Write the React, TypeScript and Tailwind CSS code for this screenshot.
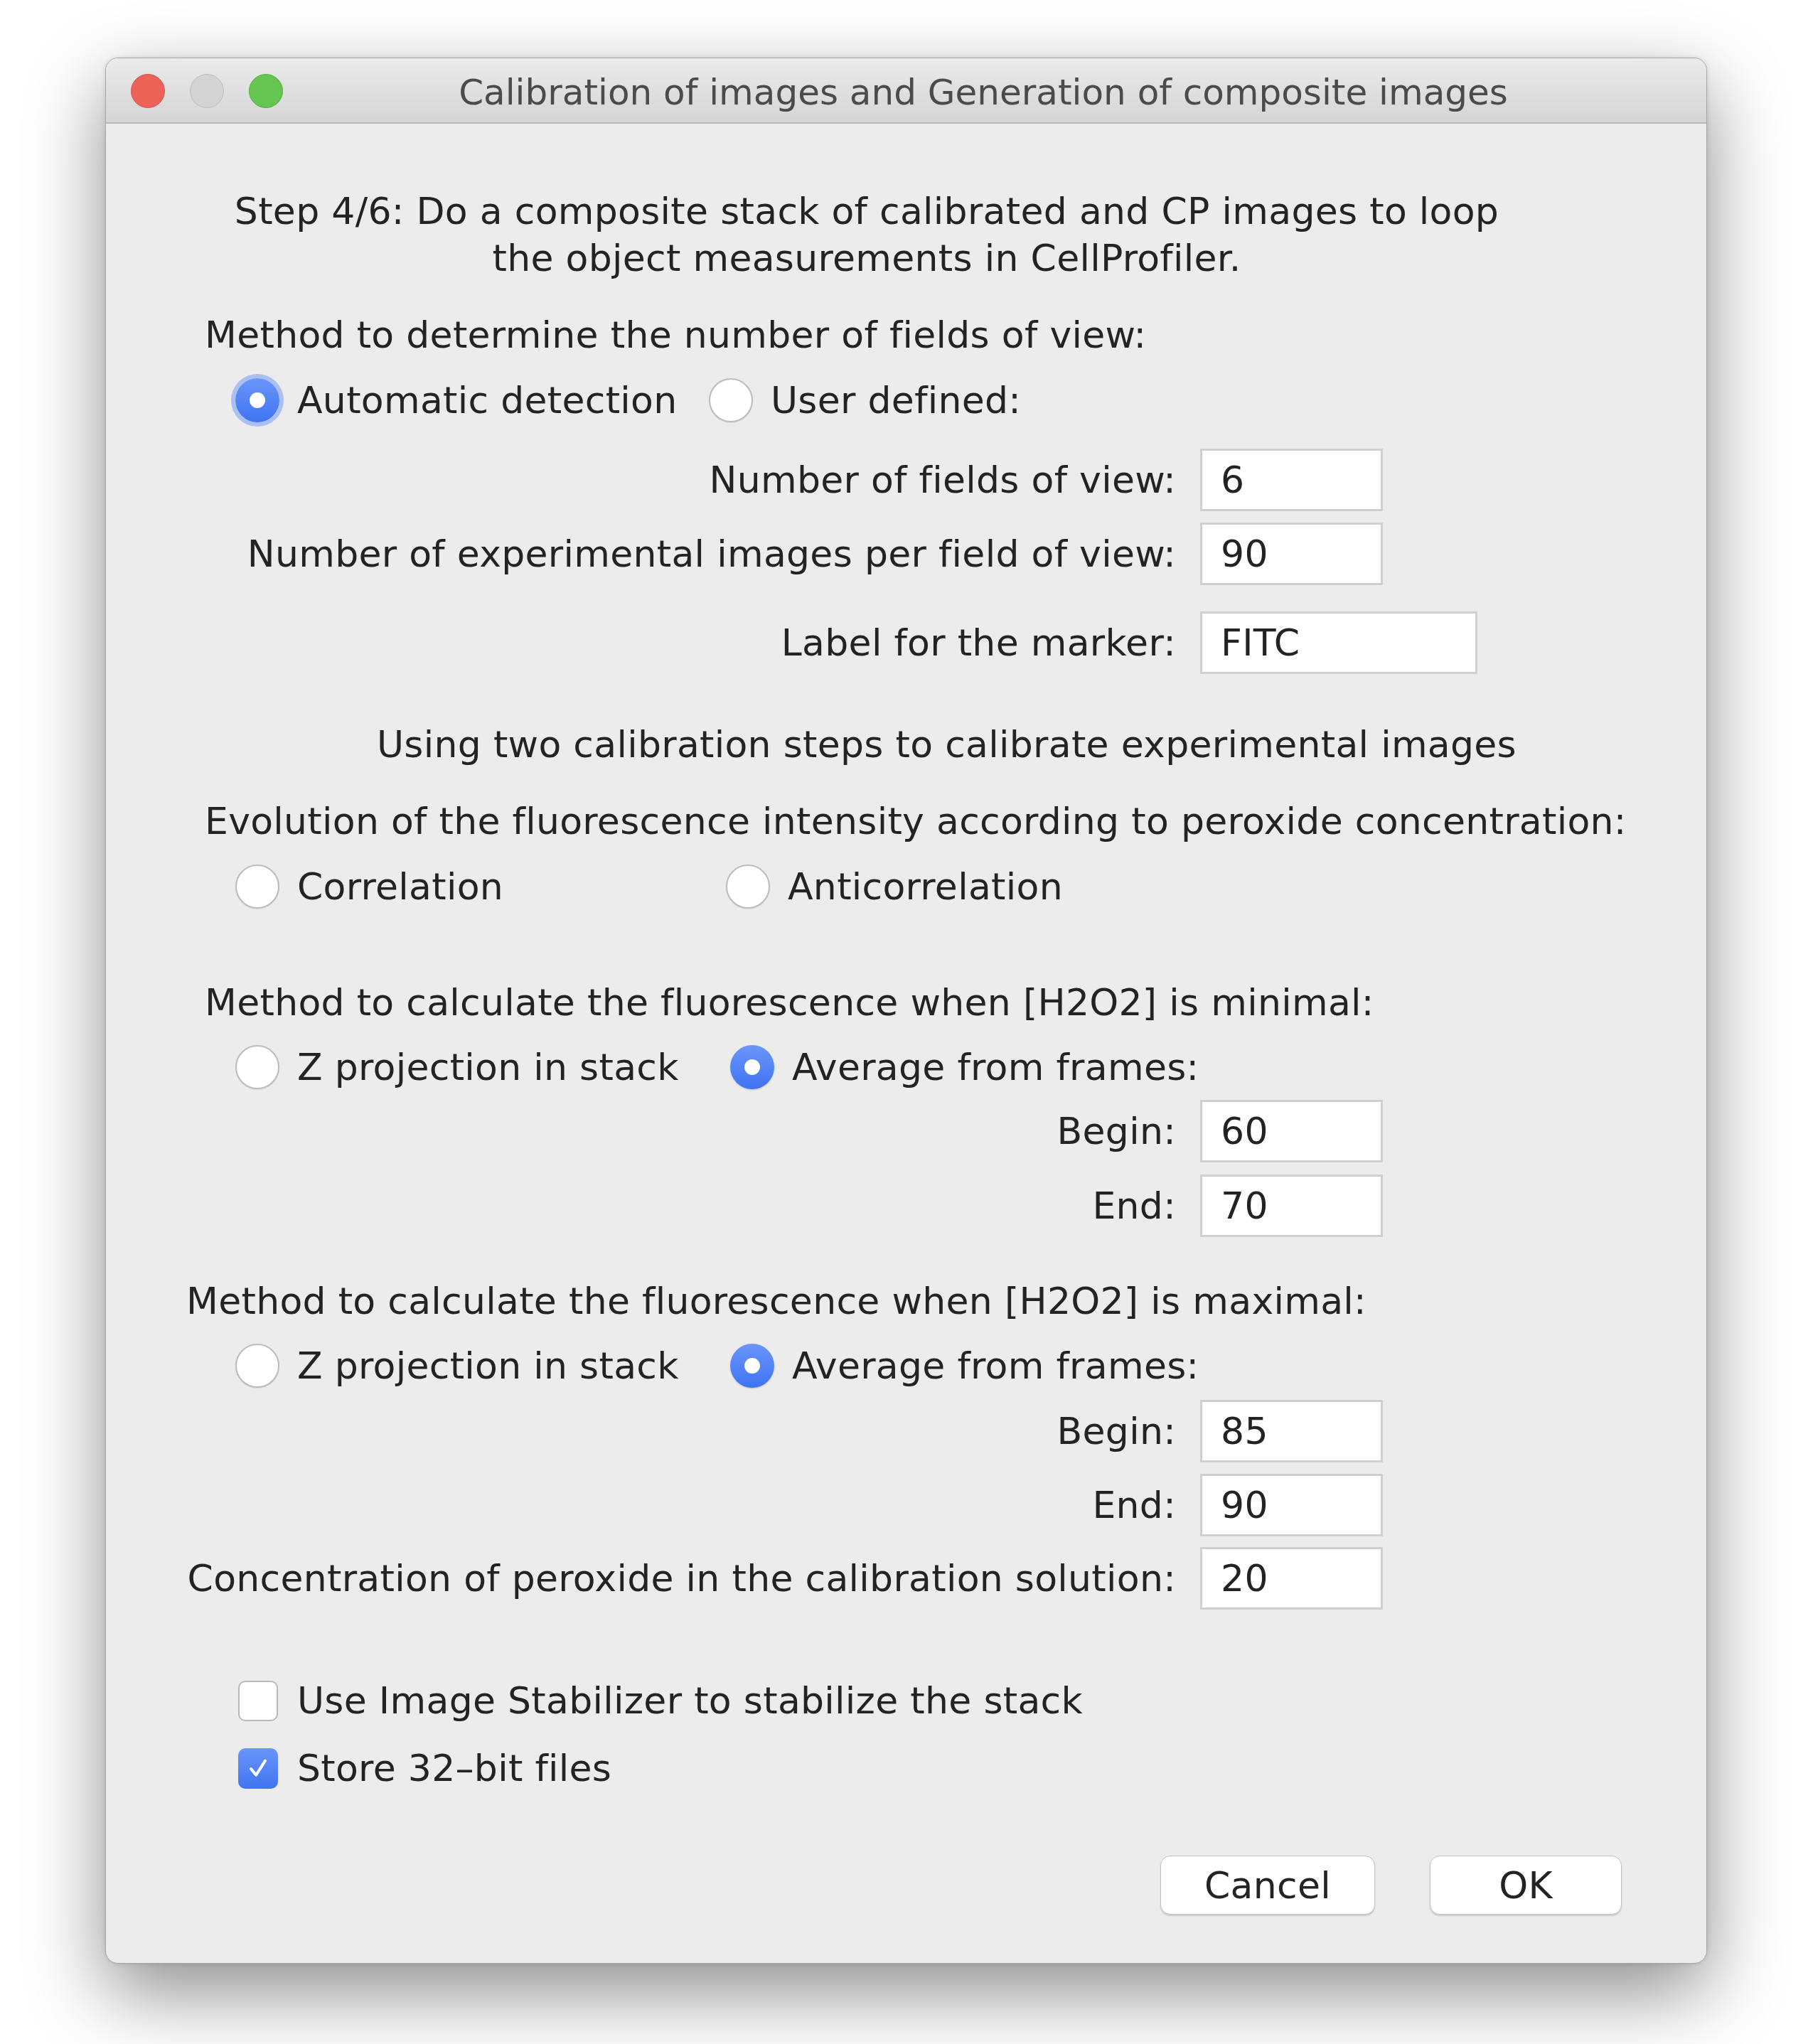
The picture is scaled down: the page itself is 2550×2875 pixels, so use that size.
import React from "react";

function RadioDot({ checked, focus }: { checked?: boolean; focus?: boolean }) {
  if (checked) {
    return (
      <span
        className={
          "flex h-[62px] w-[62px] shrink-0 items-center justify-center rounded-full bg-gradient-to-b from-[#6a95fa] to-[#3f73f2] " +
          (focus ? "shadow-[0_0_0_6px_rgba(90,140,250,0.45)]" : "shadow-[0_1px_2px_rgba(0,0,0,0.2)]")
        }
      >
        <span className="h-[22px] w-[22px] rounded-full bg-white" />
      </span>
    );
  }
  return (
    <span className="h-[62px] w-[62px] shrink-0 rounded-full border-2 border-[#bcbcbc] bg-white shadow-[0_1px_1px_rgba(0,0,0,0.08)]" />
  );
}

function Radio({ label, checked, focus, className }: { label: string; checked?: boolean; focus?: boolean; className?: string }) {
  return (
    <div className={"flex items-center " + (className ?? "")}>
      <RadioDot checked={checked} focus={focus} />
      <span className="ml-[25px] whitespace-nowrap">{label}</span>
    </div>
  );
}

function Field({ label, value, wide }: { label: string; value: string; wide?: boolean }) {
  return (
    <div className="flex h-[88px] items-center">
      <div className="w-[1505px] whitespace-nowrap text-right">{label}</div>
      <div
        className={
          "ml-[34px] flex h-[88px] items-center border-[3px] border-[#d0d0d0] bg-white pl-[26px] " +
          (wide ? "w-[390px]" : "w-[257px]")
        }
      >
        {value}
      </div>
    </div>
  );
}

function Check({ label, checked }: { label: string; checked?: boolean }) {
  return (
    <div className="flex h-[66px] items-center pl-[186px]">
      {checked ? (
        <span className="flex h-[57px] w-[56px] items-center justify-center rounded-[10px] bg-gradient-to-b from-[#6a95fa] to-[#3f73f2]">
          <svg viewBox="0 0 20 20" width="40" height="40">
            <path d="M5 10.5 L8.6 14.8 L15 4.8" fill="none" stroke="#fff" strokeWidth="2" strokeLinecap="round" strokeLinejoin="round" />
          </svg>
        </span>
      ) : (
        <span className="h-[57px] w-[56px] rounded-[10px] border-2 border-[#b9b9b9] bg-white" />
      )}
      <span className="ml-[27px] whitespace-nowrap">{label}</span>
    </div>
  );
}

export default function App() {
  return (
    <div className="min-h-[2875px] w-[2550px] overflow-hidden bg-white pl-[148px] pt-[81px] font-['DejaVu_Sans',sans-serif] text-[52px] tracking-[0.3px] text-[#232323]">
      <div className="flex h-[2681px] w-[2253px] flex-col overflow-hidden rounded-[18px] border border-[#a6a6a6] bg-[#ececec] shadow-[0_40px_110px_rgba(0,0,0,0.45),0_0_6px_rgba(0,0,0,0.12)]">
        {/* Title bar */}
        <div className="flex h-[92px] shrink-0 items-center border-b-2 border-[#b6b6b6] bg-gradient-to-b from-[#ebebeb] to-[#d5d5d5]">
          <div className="flex items-center gap-[35px] pl-[35px] pt-[2px]">
            <span className="h-[48px] w-[48px] rounded-full border border-[#d4564d] bg-[#ec6257]" />
            <span className="h-[48px] w-[48px] rounded-full border border-[#bdbdbd] bg-[#d3d3d3]" />
            <span className="h-[48px] w-[48px] rounded-full border border-[#55ad42] bg-[#64c651]" />
          </div>
          <div className="flex-1 whitespace-nowrap pr-[32px] pt-[6px] text-center text-[50px] tracking-normal text-[#4b4b4b]">
            Calibration of images and Generation of composite images
          </div>
        </div>

        {/* Content */}
        <div className="flex flex-col pt-[90px]">
          <div className="pr-[111px] text-center leading-[66px]">
            Step 4/6: Do a composite stack of calibrated and CP images to loop
            <br />
            the object measurements in CellProfiler.
          </div>

          <div className="mt-[42px] h-[66px] whitespace-nowrap pl-[139px] leading-[66px]">
            Method to determine the number of fields of view:
          </div>
          <div className="mt-[26px] flex h-[66px] items-center pl-[182px]">
            <Radio label="Automatic detection" checked focus className="w-[666px]" />
            <Radio label="User defined:" />
          </div>

          <div className="mt-[35px]">
            <Field label="Number of fields of view:" value="6" />
          </div>
          <div className="mt-[16px]">
            <Field label="Number of experimental images per field of view:" value="90" />
          </div>
          <div className="mt-[37px]">
            <Field label="Label for the marker:" value="FITC" wide />
          </div>

          <div className="mt-[66px] h-[66px] whitespace-nowrap pl-[381px] leading-[66px]">
            Using two calibration steps to calibrate experimental images
          </div>

          <div className="mt-[42px] h-[66px] whitespace-nowrap pl-[139px] leading-[66px]">
            Evolution of the fluorescence intensity according to peroxide concentration:
          </div>
          <div className="mt-[26px] flex h-[66px] items-center pl-[182px]">
            <Radio label="Correlation" className="w-[690px]" />
            <Radio label="Anticorrelation" />
          </div>

          <div className="mt-[97px] h-[66px] whitespace-nowrap pl-[139px] leading-[66px]">
            Method to calculate the fluorescence when [H2O2] is minimal:
          </div>
          <div className="mt-[25px] flex h-[66px] items-center pl-[182px]">
            <Radio label="Z projection in stack" className="w-[696px]" />
            <Radio label="Average from frames:" checked />
          </div>
          <div className="mt-[13px]">
            <Field label="Begin:" value="60" />
          </div>
          <div className="mt-[17px]">
            <Field label="End:" value="70" />
          </div>

          <div className="mt-[57px] h-[66px] whitespace-nowrap pl-[113px] leading-[66px]">
            Method to calculate the fluorescence when [H2O2] is maximal:
          </div>
          <div className="mt-[25px] flex h-[66px] items-center pl-[182px]">
            <Radio label="Z projection in stack" className="w-[696px]" />
            <Radio label="Average from frames:" checked />
          </div>
          <div className="mt-[15px]">
            <Field label="Begin:" value="85" />
          </div>
          <div className="mt-[16px]">
            <Field label="End:" value="90" />
          </div>
          <div className="mt-[15px]">
            <Field label="Concentration of peroxide in the calibration solution:" value="20" />
          </div>

          <div className="mt-[95px]">
            <Check label="Use Image Stabilizer to stabilize the stack" />
          </div>
          <div className="mt-[29px]">
            <Check label="Store 32–bit files" checked />
          </div>

          <div className="mt-[90px] flex justify-end gap-[77px] pr-[119px]">
            <button className="h-[83px] w-[302px] rounded-[14px] border border-[#c2c2c2] bg-white text-[#232323] shadow-[0_2px_2px_rgba(0,0,0,0.14)]">
              Cancel
            </button>
            <button className="h-[83px] w-[270px] rounded-[14px] border border-[#c2c2c2] bg-white text-[#232323] shadow-[0_2px_2px_rgba(0,0,0,0.14)]">
              OK
            </button>
          </div>
        </div>
      </div>
    </div>
  );
}
